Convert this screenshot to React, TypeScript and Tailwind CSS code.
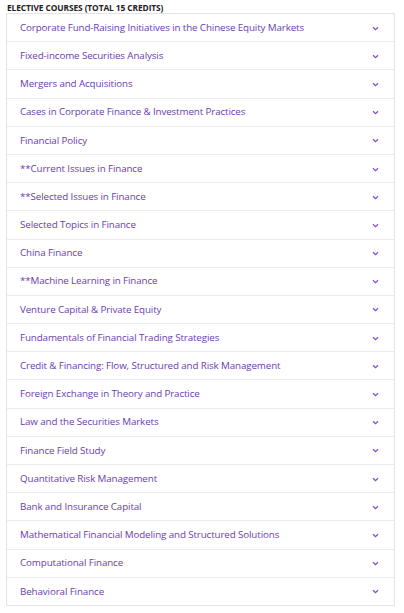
import React from "react";

const courses = [
  "Corporate Fund-Raising Initiatives in the Chinese Equity Markets",
  "Fixed-income Securities Analysis",
  "Mergers and Acquisitions",
  "Cases in Corporate Finance & Investment Practices",
  "Financial Policy",
  "**Current Issues in Finance",
  "**Selected Issues in Finance",
  "Selected Topics in Finance",
  "China Finance",
  "**Machine Learning in Finance",
  "Venture Capital & Private Equity",
  "Fundamentals of Financial Trading Strategies",
  "Credit & Financing: Flow, Structured and Risk Management",
  "Foreign Exchange in Theory and Practice",
  "Law and the Securities Markets",
  "Finance Field Study",
  "Quantitative Risk Management",
  "Bank and Insurance Capital",
  "Mathematical Financial Modeling and Structured Solutions",
  "Computational Finance",
  "Behavioral Finance",
];

function Chevron() {
  return (
    <svg width="7" height="5" viewBox="0 0 7 5" fill="none">
      <path d="M1 1.2 L3.5 3.6 L6 1.2" stroke="#7b4fc8" strokeWidth="1.2" />
    </svg>
  );
}

export default function App() {
  return (
    <div
      className="w-[404px] h-[613px] bg-white pl-[6px] pr-[9px] pt-[1px]"
      style={{ fontFamily: '"Open Sans", "Noto Sans", sans-serif' }}
    >
      <div className="h-[12px] leading-[13px] text-[8.4px] font-bold text-[#222] tracking-[-0.1px] pl-[1px]">
        ELECTIVE COURSES (TOTAL 15 CREDITS)
      </div>
      <div className="border border-[#e3e3e3]">
        {courses.map((c, i) => (
          <div
            key={i}
            className={`flex items-center justify-between pl-[13px] pr-[15px] pt-[1px] ${
              i < courses.length - 1 ? "h-[28.2px] border-b border-[#ebebeb]" : "h-[27.2px]"
            }`}
          >
            <span className="text-[9.8px] text-[#6a3db0] tracking-[-0.12px]">{c}</span>
            <Chevron />
          </div>
        ))}
      </div>
    </div>
  );
}
